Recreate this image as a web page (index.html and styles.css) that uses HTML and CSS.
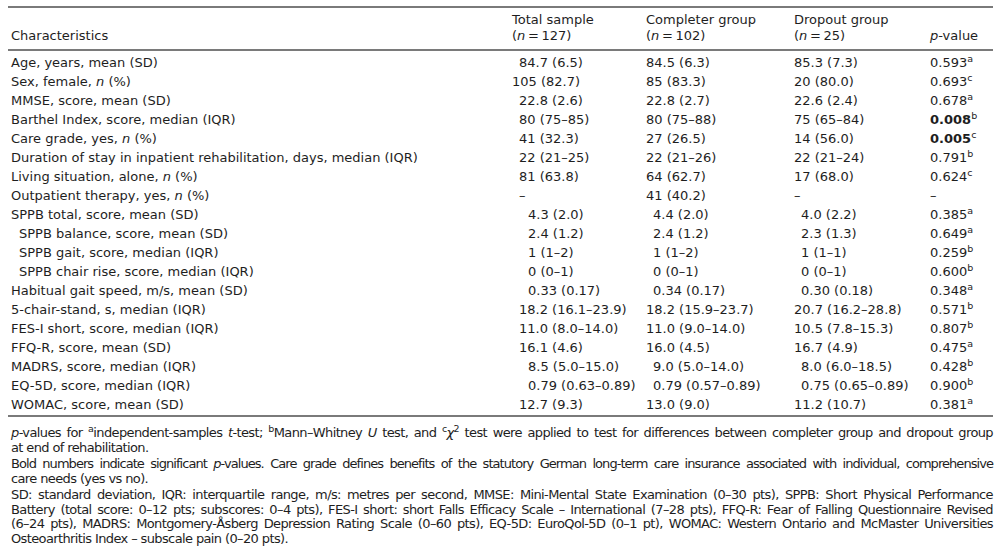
FILE: index.html
```html
<!DOCTYPE html>
<html lang="en">
<head>
<meta charset="utf-8">
<title>Baseline characteristics</title>
<link rel="stylesheet" href="styles.css">
</head>
<body>
<div class="page">
  <table class="data">
    <colgroup>
      <col class="c-char"><col class="c-tot"><col class="c-comp"><col class="c-drop"><col class="c-p">
    </colgroup>
    <thead>
      <tr>
        <th>Characteristics</th>
        <th>Total sample<br>(<i>n</i>&thinsp;=&thinsp;127)</th>
        <th>Completer group<br>(<i>n</i>&thinsp;=&thinsp;102)</th>
        <th>Dropout group<br>(<i>n</i>&thinsp;=&thinsp;25)</th>
        <th><i>p</i>-value</th>
      </tr>
    </thead>
    <tbody>
      <tr class="first"><td>Age, years, mean (SD)</td><td class="i1">84.7 (6.5)</td><td>84.5 (6.3)</td><td>85.3 (7.3)</td><td>0.593<sup>a</sup></td></tr>
      <tr><td>Sex, female, <i>n</i> (%)</td><td>105 (82.7)</td><td>85 (83.3)</td><td>20 (80.0)</td><td>0.693<sup>c</sup></td></tr>
      <tr><td>MMSE, score, mean (SD)</td><td class="i1">22.8 (2.6)</td><td>22.8 (2.7)</td><td>22.6 (2.4)</td><td>0.678<sup>a</sup></td></tr>
      <tr><td>Barthel Index, score, median (IQR)</td><td class="i1">80 (75–85)</td><td>80 (75–88)</td><td>75 (65–84)</td><td><b>0.008</b><sup>b</sup></td></tr>
      <tr><td>Care grade, yes, <i>n</i> (%)</td><td class="i1">41 (32.3)</td><td>27 (26.5)</td><td>14 (56.0)</td><td><b>0.005</b><sup>c</sup></td></tr>
      <tr><td>Duration of stay in inpatient rehabilitation, days, median (IQR)</td><td class="i1">22 (21–25)</td><td>22 (21–26)</td><td>22 (21–24)</td><td>0.791<sup>b</sup></td></tr>
      <tr><td>Living situation, alone, <i>n</i> (%)</td><td class="i1">81 (63.8)</td><td>64 (62.7)</td><td>17 (68.0)</td><td>0.624<sup>c</sup></td></tr>
      <tr><td>Outpatient therapy, yes, <i>n</i> (%)</td><td class="i1">–</td><td>41 (40.2)</td><td>–</td><td>–</td></tr>
      <tr><td>SPPB total, score, mean (SD)</td><td class="i2">4.3 (2.0)</td><td class="i1">4.4 (2.0)</td><td class="i1">4.0 (2.2)</td><td>0.385<sup>a</sup></td></tr>
      <tr><td class="sub">SPPB balance, score, mean (SD)</td><td class="i2">2.4 (1.2)</td><td class="i1">2.4 (1.2)</td><td class="i1">2.3 (1.3)</td><td>0.649<sup>a</sup></td></tr>
      <tr><td class="sub">SPPB gait, score, median (IQR)</td><td class="i2">1 (1–2)</td><td class="i1">1 (1–2)</td><td class="i1">1 (1–1)</td><td>0.259<sup>b</sup></td></tr>
      <tr><td class="sub">SPPB chair rise, score, median (IQR)</td><td class="i2">0 (0–1)</td><td class="i1">0 (0–1)</td><td class="i1">0 (0–1)</td><td>0.600<sup>b</sup></td></tr>
      <tr><td>Habitual gait speed, m/s, mean (SD)</td><td class="i2">0.33 (0.17)</td><td class="i1">0.34 (0.17)</td><td class="i1">0.30 (0.18)</td><td>0.348<sup>a</sup></td></tr>
      <tr><td>5-chair-stand, s, median (IQR)</td><td class="i1">18.2 (16.1–23.9)</td><td>18.2 (15.9–23.7)</td><td>20.7 (16.2–28.8)</td><td>0.571<sup>b</sup></td></tr>
      <tr><td>FES-I short, score, median (IQR)</td><td class="i1">11.0 (8.0–14.0)</td><td>11.0 (9.0–14.0)</td><td>10.5 (7.8–15.3)</td><td>0.807<sup>b</sup></td></tr>
      <tr><td>FFQ-R, score, mean (SD)</td><td class="i1">16.1 (4.6)</td><td>16.0 (4.5)</td><td>16.7 (4.9)</td><td>0.475<sup>a</sup></td></tr>
      <tr><td>MADRS, score, median (IQR)</td><td class="i2">8.5 (5.0–15.0)</td><td class="i1">9.0 (5.0–14.0)</td><td class="i1">8.0 (6.0–18.5)</td><td>0.428<sup>b</sup></td></tr>
      <tr><td>EQ-5D, score, median (IQR)</td><td class="i2">0.79 (0.63–0.89)</td><td class="i1">0.79 (0.57–0.89)</td><td class="i1">0.75 (0.65–0.89)</td><td>0.900<sup>b</sup></td></tr>
      <tr class="last"><td>WOMAC, score, mean (SD)</td><td class="i1">12.7 (9.3)</td><td>13.0 (9.0)</td><td>11.2 (10.7)</td><td>0.381<sup>a</sup></td></tr>
    </tbody>
  </table>

  <div class="notes">
    <p>
      <span class="line full"><i>p</i>-values for <sup>a</sup>independent-samples <i>t</i>-test; <sup>b</sup>Mann–Whitney <i>U</i> test, and <sup>c</sup><i>χ</i><sup>2</sup> test were applied to test for differences between completer group and dropout group</span>
      <span class="line">at end of rehabilitation.</span>
    </p>
    <p>
      <span class="line full tight">Bold numbers indicate significant <i>p</i>-values. Care grade defines benefits of the statutory German long-term care insurance associated with individual, comprehensive</span>
      <span class="line">care needs (yes vs no).</span>
    </p>
    <p>
      <span class="line full">SD: standard deviation, IQR: interquartile range, m/s: metres per second, MMSE: Mini-Mental State Examination (0–30 pts), SPPB: Short Physical Performance</span>
      <span class="line full">Battery (total score: 0–12 pts; subscores: 0–4 pts), FES-I short: short Falls Efficacy Scale – International (7–28 pts), FFQ-R: Fear of Falling Questionnaire Revised</span>
      <span class="line full">(6–24 pts), MADRS: Montgomery-Åsberg Depression Rating Scale (0–60 pts), EQ-5D: EuroQol-5D (0–1 pt), WOMAC: Western Ontario and McMaster Universities</span>
      <span class="line">Osteoarthritis Index – subscale pain (0–20 pts).</span>
    </p>
  </div>
</div>
</body>
</html>
```

FILE: styles.css
```css
html, body {
  margin: 0;
  padding: 0;
  background: #ffffff;
}

body {
  font-family: "DejaVu Sans", Verdana, sans-serif;
  font-size: 13px;
  color: #1e1e1e;
}

.page {
  padding: 6px 0 0 8px;
  width: 985px;
}

.data {
  width: 985px;
  border-collapse: collapse;
  table-layout: fixed;
  border-top: 2px solid #7a7a7a;
  border-bottom: 2px solid #7a7a7a;
}

.c-char { width: 501px; }
.c-tot { width: 134px; }
.c-comp { width: 148px; }
.c-drop { width: 136px; }
.c-p { width: 66px; }

.data thead tr {
  border-bottom: 2px solid #7a7a7a;
}

.data th {
  font-weight: normal;
  text-align: left;
  vertical-align: bottom;
  line-height: 16px;
  padding: 4px 3px 5px 3px;
  white-space: nowrap;
}

.data td {
  height: 19px;
  line-height: 19px;
  padding: 0 3px;
  white-space: nowrap;
  vertical-align: top;
}

.data tr.first td {
  padding-top: 2px;
}

.data tr.last td {
  padding-bottom: 1px;
}

.data td.sub { padding-left: 11px; }
.data td.i1 { padding-left: 10px; }
.data td.i2 { padding-left: 19px; }

.data sup {
  font-size: 9.5px;
  line-height: 0;
  vertical-align: 5px;
}

.data b {
  font-weight: bold;
}

.notes {
  margin-top: 9px;
  padding-left: 3px;
  width: 982px;
  line-height: 14.5px;
  letter-spacing: -0.62px;
}

.notes p {
  margin: 0 0 2px 0;
}

.notes .line {
  display: block;
  white-space: nowrap;
}

.notes .line.full {
  text-align: justify;
  text-align-last: justify;
}

.notes .tight {
  letter-spacing: -0.95px;
}

.notes sup {
  font-size: 9.5px;
  line-height: 0;
  vertical-align: 5px;
}
```
